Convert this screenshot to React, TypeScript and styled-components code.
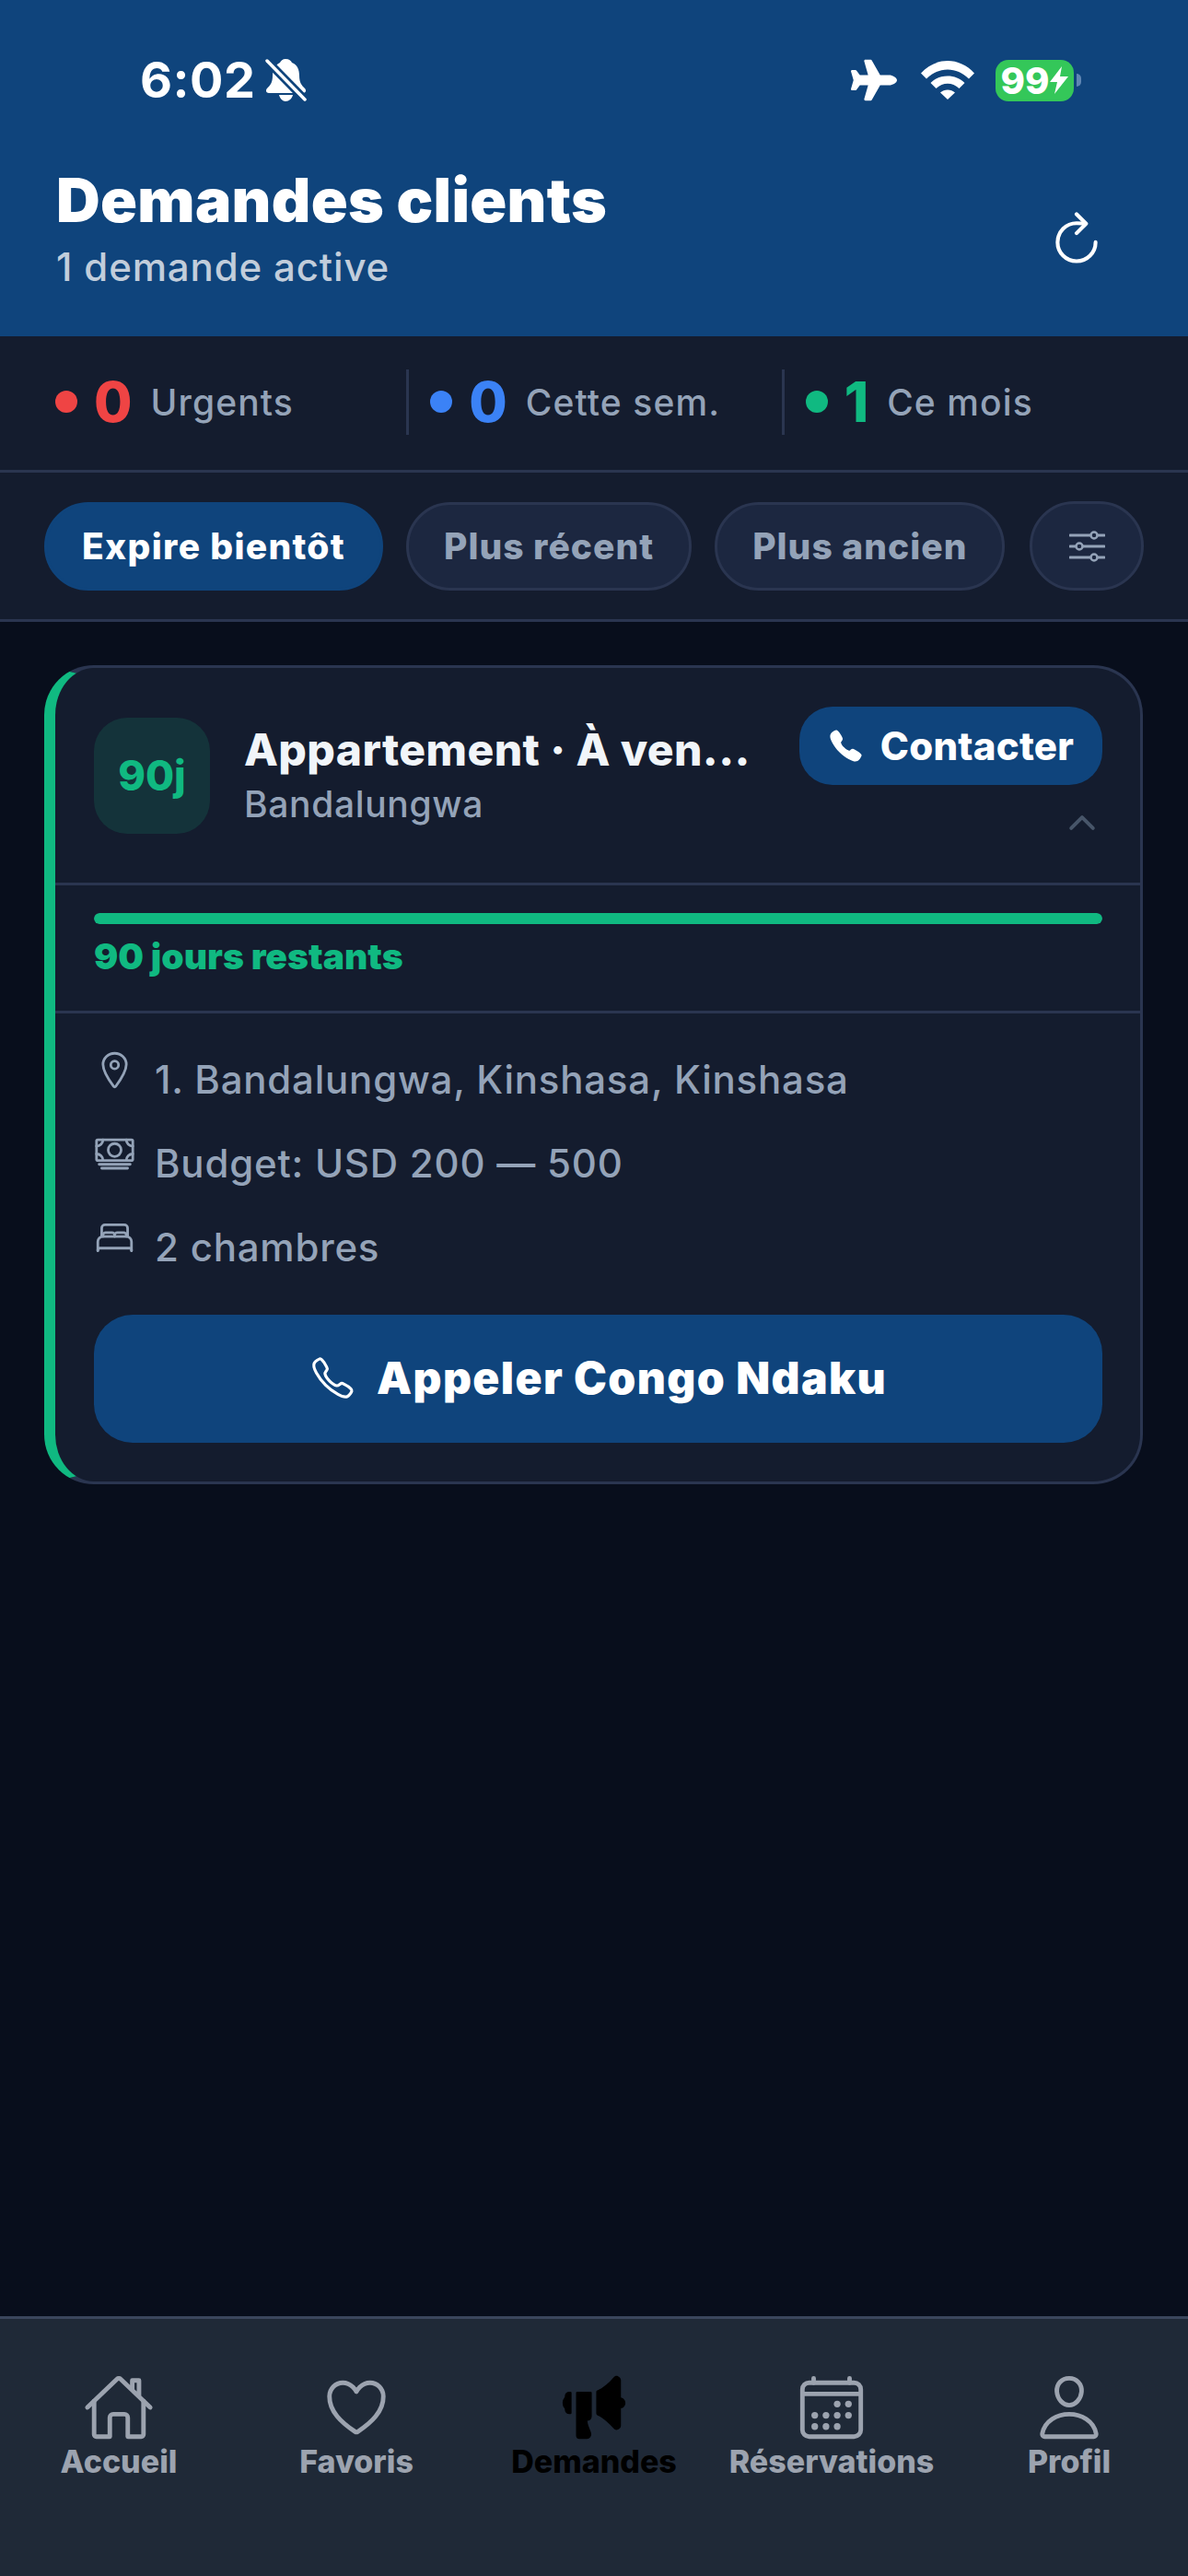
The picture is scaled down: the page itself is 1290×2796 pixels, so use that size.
import styled, { createGlobalStyle } from "styled-components";
import { FaPlane } from "react-icons/fa";
import {
  IoBedOutline,
  IoCalendarOutline,
  IoCall,
  IoCallOutline,
  IoCashOutline,
  IoChevronUp,
  IoHeartOutline,
  IoHomeOutline,
  IoLocationOutline,
  IoMegaphone,
  IoPersonOutline,
  IoRefreshOutline,
} from "react-icons/io5";

const GlobalStyle = createGlobalStyle`
  * { box-sizing: border-box; }
  body {
    margin: 0;
    background: #080e1c;
    font-family: Inter, "Noto Sans", sans-serif;
  }
`;

const stats = [
  { count: 0, label: "Urgents", color: "#ef4444" },
  { count: 0, label: "Cette sem.", color: "#3b82f6" },
  { count: 1, label: "Ce mois", color: "#10b981" },
];

const sorts = [
  { label: "Expire bientôt", active: true },
  { label: "Plus récent", active: false },
  { label: "Plus ancien", active: false },
];

const details = [
  { icon: <IoLocationOutline />, text: "1. Bandalungwa, Kinshasa, Kinshasa" },
  { icon: <IoCashOutline />, text: "Budget: USD 200 — 500" },
  { icon: <IoBedOutline />, text: "2 chambres" },
];

const tabs = [
  { icon: <IoHomeOutline />, label: "Accueil", active: false },
  { icon: <IoHeartOutline />, label: "Favoris", active: false },
  { icon: <IoMegaphone />, label: "Demandes", active: true },
  { icon: <IoCalendarOutline />, label: "Réservations", active: false },
  { icon: <IoPersonOutline />, label: "Profil", active: false },
];

const sliders = [
  { y: 6, knob: 27 },
  { y: 18, knob: 11 },
  { y: 30, knob: 27 },
];

export default function App() {
  return (
    <Page>
      <GlobalStyle />
      <Header>
        <StatusBar>
          <TimeGroup>
            <Time>6:02</Time>
            <svg width="45" height="46" viewBox="0 0 45 46">
              <path
                fill="#ffffff"
                d="M22 0 C26 0 28 2 29 4 C35 6 37 12 37 18 C37 26 40 29 43 32 C45 34 44 37 41 37 H4 C1 37 0 34 2 32 C5 29 8 26 8 18 C8 12 11 6 16 4 C17 2 19 0 22 0 Z M15 39 H30 C29 43 26 46 22 46 C19 46 16 43 15 39 Z"
              />
              <path d="M0 0 L43 44" stroke="#0f447c" strokeWidth="9" />
              <path d="M2 2 L43 44" stroke="#ffffff" strokeWidth="3.5" strokeLinecap="round" />
            </svg>
          </TimeGroup>
          <StatusIcons>
            <FaPlane size={50} />
            <svg width="58" height="42" viewBox="0 0 58 42" fill="white">
              <path d="M0 13.5 C16 -4.5 42 -4.5 58 13.5 L52 19.5 C39 6 19 6 6 19.5 Z" />
              <path d="M10.5 24 C20 14 38 14 47.5 24 L41.5 30 C34 23 24 23 16.5 30 Z" />
              <path d="M21 34.5 C25.5 30.5 32.5 30.5 37 34.5 L29 42 Z" />
            </svg>
            <Battery>
              <BatteryBody>
                99
                <svg width="20" height="30" viewBox="0 0 20 30" fill="white">
                  <path d="M13 0 L0 17 H8 L5 30 L20 11 H11 Z" />
                </svg>
              </BatteryBody>
              <BatteryNub />
            </Battery>
          </StatusIcons>
        </StatusBar>
        <HeaderRow>
          <div>
            <PageTitle>Demandes clients</PageTitle>
            <PageSubtitle>1 demande active</PageSubtitle>
          </div>
          <RefreshSlot>
            <IoRefreshOutline size={66} color="#ffffff" />
          </RefreshSlot>
        </HeaderRow>
      </Header>

      <StatsBar>
        {stats.map((item, index) => (
          <StatCell key={item.label} $divided={index > 0}>
            <StatDot $color={item.color} />
            <StatCount $color={item.color}>{item.count}</StatCount>
            <StatLabel>{item.label}</StatLabel>
          </StatCell>
        ))}
      </StatsBar>

      <SortBar>
        {sorts.map((item) => (
          <SortChip key={item.label} $active={item.active}>
            {item.label}
          </SortChip>
        ))}
        <FilterChip>
          <svg width="39" height="36" viewBox="0 0 39 36">
            {sliders.map((s) => (
              <g key={s.y}>
                <line x1="1" x2="38" y1={s.y} y2={s.y} stroke="#94a3b8" strokeWidth="3" strokeLinecap="round" />
                <circle cx={s.knob} cy={s.y} r="3.5" fill="#1c2740" stroke="#94a3b8" strokeWidth="2.5" />
              </g>
            ))}
          </svg>
        </FilterChip>
      </SortBar>

      <Main>
        <Card>
          <CardHeader>
            <DaysBadge>90j</DaysBadge>
            <CardInfo>
              <CardTitle>Appartement · À ven...</CardTitle>
              <CardPlace>Bandalungwa</CardPlace>
            </CardInfo>
            <CardActions>
              <ContactButton>
                <IoCall size={39} />
                Contacter
              </ContactButton>
              <Chevron>
                <IoChevronUp size={42} />
              </Chevron>
            </CardActions>
          </CardHeader>

          <ProgressBlock>
            <ProgressTrack>
              <ProgressFill style={{ width: `${(90 / 90) * 100}%` }} />
            </ProgressTrack>
            <ProgressLabel>90 jours restants</ProgressLabel>
          </ProgressBlock>

          <DetailsBlock>
            {details.map((item) => (
              <DetailRow key={item.text}>
                <DetailIcon>{item.icon}</DetailIcon>
                <DetailText>{item.text}</DetailText>
              </DetailRow>
            ))}
            <CallButton>
              <IoCallOutline size={51} />
              Appeler Congo Ndaku
            </CallButton>
          </DetailsBlock>
        </Card>
      </Main>

      <TabBar>
        {tabs.map((item) => (
          <Tab key={item.label} $active={item.active}>
            <TabIcon>{item.icon}</TabIcon>
            <TabLabel>{item.label}</TabLabel>
          </Tab>
        ))}
      </TabBar>
    </Page>
  );
}

const Page = styled.div`
  display: flex;
  flex-direction: column;
  width: 1290px;
  height: 2796px;
  overflow: hidden;
  background: #080e1c;
`;

const Header = styled.header`
  height: 365px;
  background: #0f447c;
  color: #ffffff;
`;

const StatusBar = styled.div`
  display: flex;
  align-items: center;
  justify-content: space-between;
  height: 174px;
  padding: 0 116px 0 152px;
`;

const TimeGroup = styled.div`
  display: flex;
  align-items: center;
  gap: 10px;
`;

const Time = styled.span`
  font-size: 54px;
  line-height: 60px;
  font-weight: 700;
  letter-spacing: 0.5px;
`;

const StatusIcons = styled.div`
  display: flex;
  align-items: center;
  gap: 26px;
`;

const Battery = styled.div`
  display: flex;
  align-items: center;
  gap: 3px;
  margin-left: -3px;
`;

const BatteryBody = styled.div`
  display: flex;
  align-items: center;
  justify-content: center;
  gap: 1px;
  width: 85px;
  height: 45px;
  border-radius: 14px;
  background: #34c759;
  font-size: 40px;
  line-height: 45px;
  font-weight: 800;
`;

const BatteryNub = styled.div`
  width: 5px;
  height: 14px;
  border-radius: 0 5px 5px 0;
  background: #5f86b3;
`;

const HeaderRow = styled.div`
  display: flex;
  align-items: center;
  justify-content: space-between;
  padding: 3px 88px 0 61px;
`;

const RefreshSlot = styled.div`
  display: flex;
  margin-top: 24px;
`;

const PageTitle = styled.h1`
  margin: 0;
  font-size: 66px;
  line-height: 80px;
  font-weight: 900;
  letter-spacing: 0.3px;
  color: #ffffff;
`;

const PageSubtitle = styled.p`
  margin: 8px 0 0;
  font-size: 42px;
  line-height: 50px;
  font-weight: 500;
  letter-spacing: 0.85px;
  color: #c1cddb;
`;

const StatsBar = styled.section`
  display: flex;
  align-items: center;
  height: 148px;
  padding: 0 34px 3px;
  background: #141c2e;
  border-bottom: 3px solid #2a3550;
`;

const StatCell = styled.div<{ $divided: boolean }>`
  flex: 1;
  display: flex;
  align-items: center;
  height: 71px;
  padding-left: 23px;
  border-left: 3px solid ${(p) => (p.$divided ? "#2a3550" : "transparent")};
`;

const StatDot = styled.span<{ $color: string }>`
  width: 24px;
  height: 24px;
  border-radius: 50%;
  background: ${(p) => p.$color};
`;

const StatCount = styled.span<{ $color: string }>`
  margin: 0 20px 0 18px;
  font-size: 60px;
  line-height: 71px;
  font-weight: 800;
  color: ${(p) => p.$color};
`;

const StatLabel = styled.span`
  font-size: 39px;
  font-weight: 500;
  letter-spacing: 1.1px;
  color: #94a3b8;
`;

const SortBar = styled.section`
  display: flex;
  align-items: center;
  gap: 25px;
  height: 162px;
  padding: 0 48px;
  background: #141c2e;
  border-bottom: 3px solid #2a3550;
`;

const SortChip = styled.div<{ $active: boolean }>`
  display: flex;
  align-items: center;
  height: 96px;
  padding: 0 38px;
  border-radius: 48px;
  border: 3px solid ${(p) => (p.$active ? "#0f447c" : "#2a3550")};
  background: ${(p) => (p.$active ? "#0f447c" : "#1c2740")};
  color: ${(p) => (p.$active ? "#ffffff" : "#94a3b8")};
  font-size: 39px;
  font-weight: 800;
  letter-spacing: ${(p) => (p.$active ? "1.3px" : "1px")};
  white-space: nowrap;
`;

const FilterChip = styled.div`
  display: flex;
  align-items: center;
  justify-content: center;
  width: 124px;
  height: 97px;
  margin-left: 2px;
  border-radius: 49px;
  border: 3px solid #2a3550;
  background: #1c2740;
`;

const Main = styled.main`
  flex: 1;
  padding: 47px 49px 0 48px;
`;

const Card = styled.article`
  border: 3px solid #2a3550;
  border-left: 12px solid #10b981;
  border-radius: 54px;
  background: #141c2e;
  overflow: hidden;
`;

const CardHeader = styled.div`
  display: flex;
  align-items: center;
  padding: 42px 41px 44px 42px;
  border-bottom: 3px solid #2a3550;
`;

const DaysBadge = styled.div`
  flex: none;
  display: flex;
  align-items: center;
  justify-content: center;
  width: 126px;
  height: 126px;
  margin-top: 2px;
  border-radius: 36px;
  background: #14333a;
  color: #10b981;
  font-size: 45px;
  font-weight: 800;
`;

const CardInfo = styled.div`
  flex: 1;
  min-width: 0;
  margin: 0 44px 0 37px;
`;

const CardTitle = styled.div`
  font-size: 48px;
  line-height: 60px;
  font-weight: 800;
  letter-spacing: 0.4px;
  color: #f1f5f9;
  white-space: nowrap;
`;

const CardPlace = styled.div`
  margin-top: 4px;
  font-size: 39px;
  line-height: 50px;
  font-weight: 500;
  letter-spacing: 0.65px;
  color: #94a3b8;
`;

const CardActions = styled.div`
  flex: none;
  display: flex;
  flex-direction: column;
  align-items: flex-end;
  gap: 20px;
`;

const ContactButton = styled.div`
  display: flex;
  align-items: center;
  gap: 18px;
  height: 85px;
  padding: 0 31px;
  border-radius: 36px;
  background: #0f447c;
  color: #ffffff;
  font-size: 42px;
  font-weight: 800;
  letter-spacing: 0.2px;
`;

const Chevron = styled.div`
  display: flex;
  margin-right: 1px;
  color: #475569;
`;

const ProgressBlock = styled.div`
  padding: 30px 41px 35px 42px;
  border-bottom: 3px solid #2a3550;
`;

const ProgressTrack = styled.div`
  height: 12px;
  border-radius: 6px;
  background: #2a3550;
  overflow: hidden;
`;

const ProgressFill = styled.div`
  height: 100%;
  border-radius: 6px;
  background: #10b981;
`;

const ProgressLabel = styled.div`
  margin-top: 11px;
  font-size: 39px;
  line-height: 48px;
  font-weight: 900;
  color: #10b981;
`;

const DetailsBlock = styled.div`
  display: flex;
  flex-direction: column;
  gap: 28px;
  padding: 40px 41px 42px 42px;
`;

const DetailRow = styled.div`
  display: flex;
  align-items: flex-start;
  gap: 21px;
  height: 63px;
`;

const DetailIcon = styled.span`
  display: flex;
  margin-top: -1px;
  color: #94a3b8;
  font-size: 45px;
`;

const DetailText = styled.span`
  font-size: 42px;
  line-height: 63px;
  font-weight: 500;
  letter-spacing: 0.78px;
  color: #94a3b8;
`;

const CallButton = styled.div`
  display: flex;
  align-items: center;
  justify-content: center;
  gap: 22px;
  height: 139px;
  margin-top: 14px;
  padding-bottom: 2px;
  border-radius: 42px;
  background: #0f447c;
  color: #ffffff;
  font-size: 48px;
  font-weight: 900;
  letter-spacing: 1.4px;
`;

const TabBar = styled.nav`
  display: grid;
  grid-template-columns: repeat(5, 1fr);
  height: 282px;
  padding-top: 57px;
  border-top: 3px solid #3a465c;
  background: #1f2937;
`;

const Tab = styled.div<{ $active: boolean }>`
  display: flex;
  flex-direction: column;
  align-items: center;
  color: ${(p) => (p.$active ? "#000000" : "#9ca3af")};
`;

const TabIcon = styled.span`
  display: flex;
  font-size: 78px;
`;

const TabLabel = styled.span`
  margin-top: -1px;
  font-size: 34px;
  line-height: 42px;
  font-weight: 800;
  white-space: nowrap;
`;
